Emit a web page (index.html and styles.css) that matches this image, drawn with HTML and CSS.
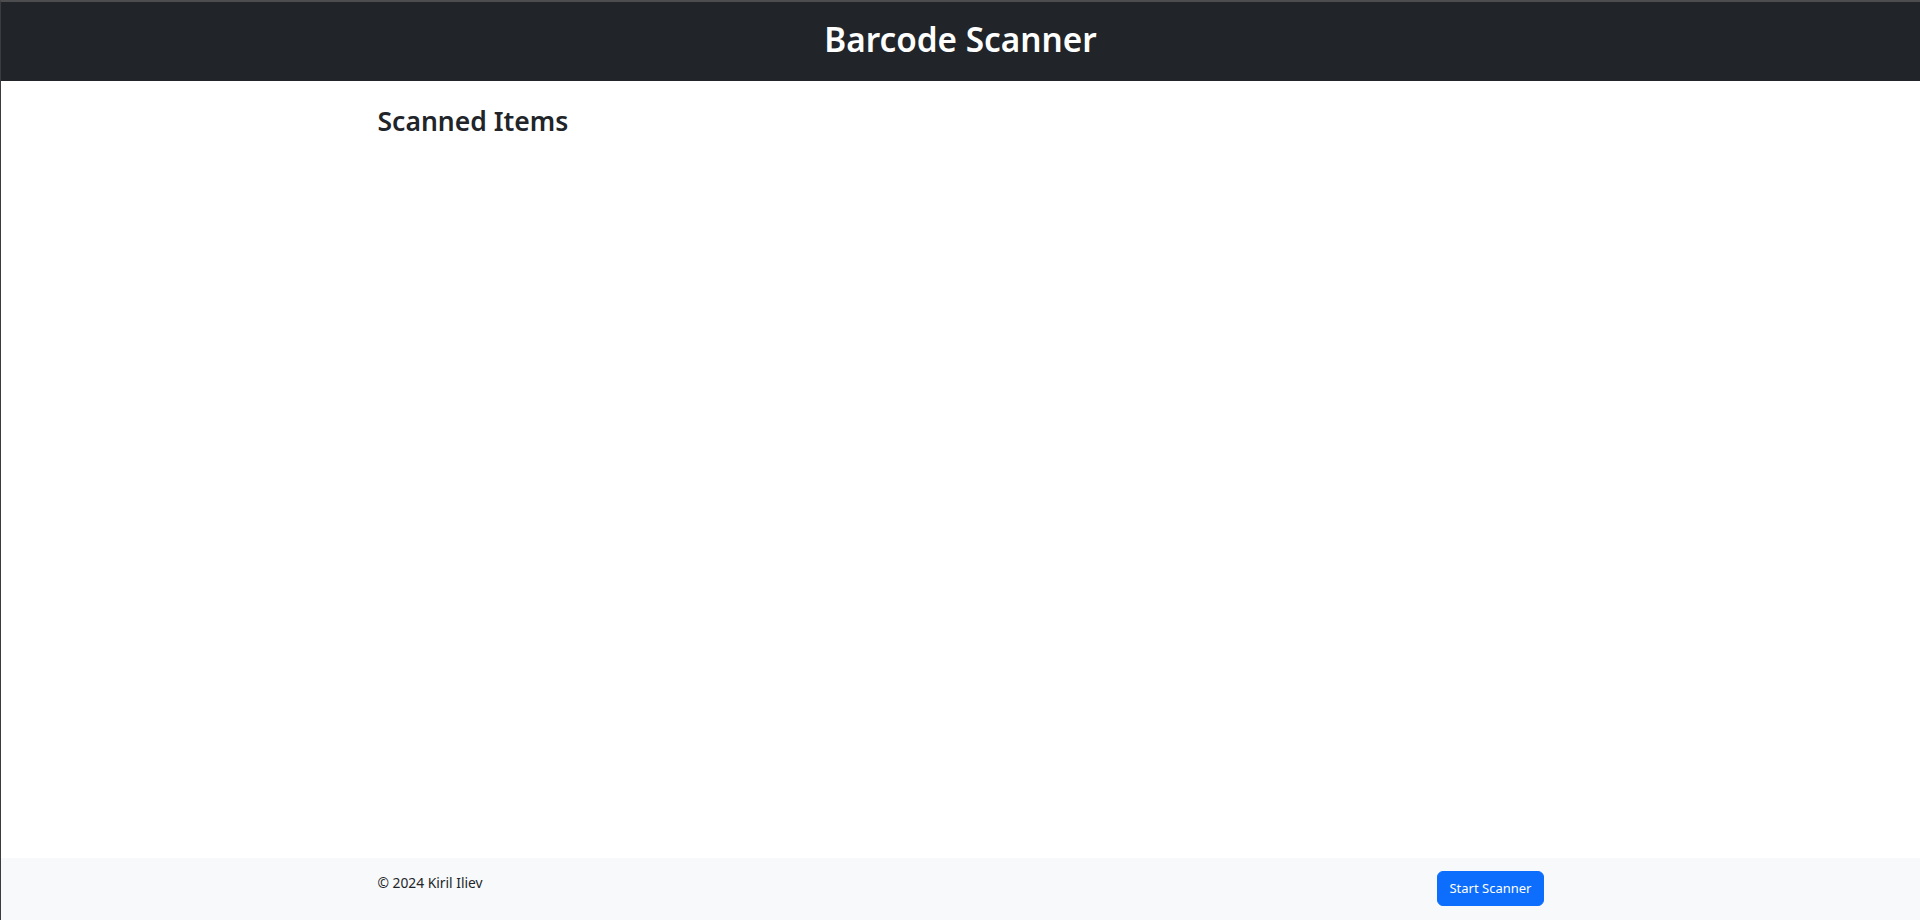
FILE: index.html
```html
<!DOCTYPE html>
<html lang="en">
<head>
<meta charset="utf-8">
<title>Barcode Scanner</title>
<link rel="stylesheet" href="styles.css">
</head>
<body>
<div class="page">
  <header class="topbar">
    <h1 class="topbar-title">Barcode Scanner</h1>
  </header>
  <main class="content">
    <div class="container">
      <h3 class="section-title">Scanned Items</h3>
      <ul class="items"></ul>
    </div>
  </main>
  <footer class="footer">
    <div class="container footer-inner">
      <span class="copyright">© 2024 Kiril Iliev</span>
      <button class="btn-primary" type="button">Start Scanner</button>
    </div>
  </footer>
</div>
</body>
</html>
```
FILE: styles.css
```css
* { box-sizing: border-box; }
html, body { margin: 0; padding: 0; height: 100%; }
body {
  font-family: "Noto Sans", "Open Sans", sans-serif;
  color: #212529;
  background: #fff;
}
.page {
  min-height: 100vh;
  display: flex;
  flex-direction: column;
  border-top: 2px solid #4d4d4f;
  border-left: 1px solid #3c3c3e;
}
.topbar {
  background: #212529;
  height: 79px;
  display: flex;
  align-items: center;
  justify-content: center;
}
.topbar-title {
  margin: 0 0 3px;
  color: #fff;
  font-size: 33.3px;
  font-weight: 600;
  line-height: 1.2;
}
.content { flex: 1; }
.container {
  width: 1166px;
  margin: 0 auto;
}
.section-title {
  margin: 25px 0 0;
  font-size: 26.5px;
  font-weight: 600;
  line-height: 1.2;
}
.items { list-style: none; margin: 0; padding: 0; }
.footer {
  background: #f8f9fa;
  height: 62px;
}
.footer-inner {
  display: flex;
  justify-content: space-between;
  align-items: flex-start;
  padding-top: 13px;
}
.copyright {
  font-size: 13.8px;
  line-height: 21px;
  padding-top: 1px;
}
.btn-primary {
  font-family: inherit;
  font-size: 13px;
  line-height: 21px;
  color: #fff;
  background: #0d6efd;
  border: 1px solid #0d6efd;
  border-radius: 6px;
  padding: 6px 11px;
  cursor: pointer;
}
```
